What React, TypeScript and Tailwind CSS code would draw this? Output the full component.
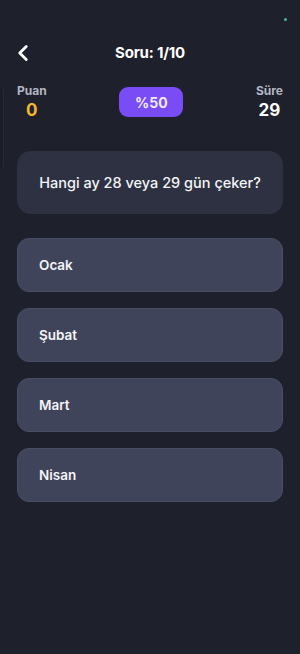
import { ChevronLeft } from 'lucide-react';

const OPTIONS = ['Ocak', 'Şubat', 'Mart', 'Nisan'];

export default function App() {
  return (
    <div className="relative w-[300px] h-[654px] overflow-hidden bg-[#1e202c] text-white font-['Inter',sans-serif]">
      {/* status dot */}
      <div className="absolute right-[13px] top-[18px] w-[3px] h-[3px] rounded-full bg-[#4fb89a]" />
      {/* off-screen side panel edge */}
      <div className="absolute -left-[10px] top-[84px] w-[14px] h-[88px] rounded-[6px] bg-[#1b1d28] border border-[#262937]" />

      <div className="px-[17px] pt-[40px]">
        <div className="relative flex items-center justify-center h-[26px]">
          <ChevronLeft size={26} strokeWidth={2.6} className="absolute -left-[7px] text-white" />
          <h1 className="text-[15px] font-bold tracking-[-0.2px]">Soru: 1/10</h1>
        </div>

        <div className="mt-[17px] flex items-center justify-between">
          <div className="flex flex-col items-center">
            <span className="text-[12px] font-bold text-[#b3b6c2] leading-[15px]">Puan</span>
            <span className="text-[17px] font-bold text-[#f2b632] leading-[22px] mt-[1px]">0</span>
          </div>
          <div className="w-[64px] h-[30px] rounded-[9px] bg-[#7a4cf5] flex items-center justify-center text-[14px] font-bold text-[#f1ecff]">
            %50
          </div>
          <div className="flex flex-col items-center">
            <span className="text-[12px] font-bold text-[#b3b6c2] leading-[15px]">Süre</span>
            <span className="text-[17px] font-bold text-white leading-[22px] mt-[1px]">29</span>
          </div>
        </div>

        <div className="mt-[30px] h-[63px] rounded-[14px] bg-[#2d3142] flex items-center justify-center">
          <p className="text-[14.5px] font-medium text-[#f4f5f8]">Hangi ay 28 veya 29 gün çeker?</p>
        </div>

        <div className="mt-[24px] flex flex-col gap-[16px]">
          {OPTIONS.map((o) => (
            <button
              key={o}
              className="h-[54px] rounded-[12px] bg-[#40445a] border border-[#4a4e64] flex items-center px-[21px] text-left"
            >
              <span className="text-[13.5px] font-semibold text-[#f4f5f8]">{o}</span>
            </button>
          ))}
        </div>
      </div>
    </div>
  );
}
